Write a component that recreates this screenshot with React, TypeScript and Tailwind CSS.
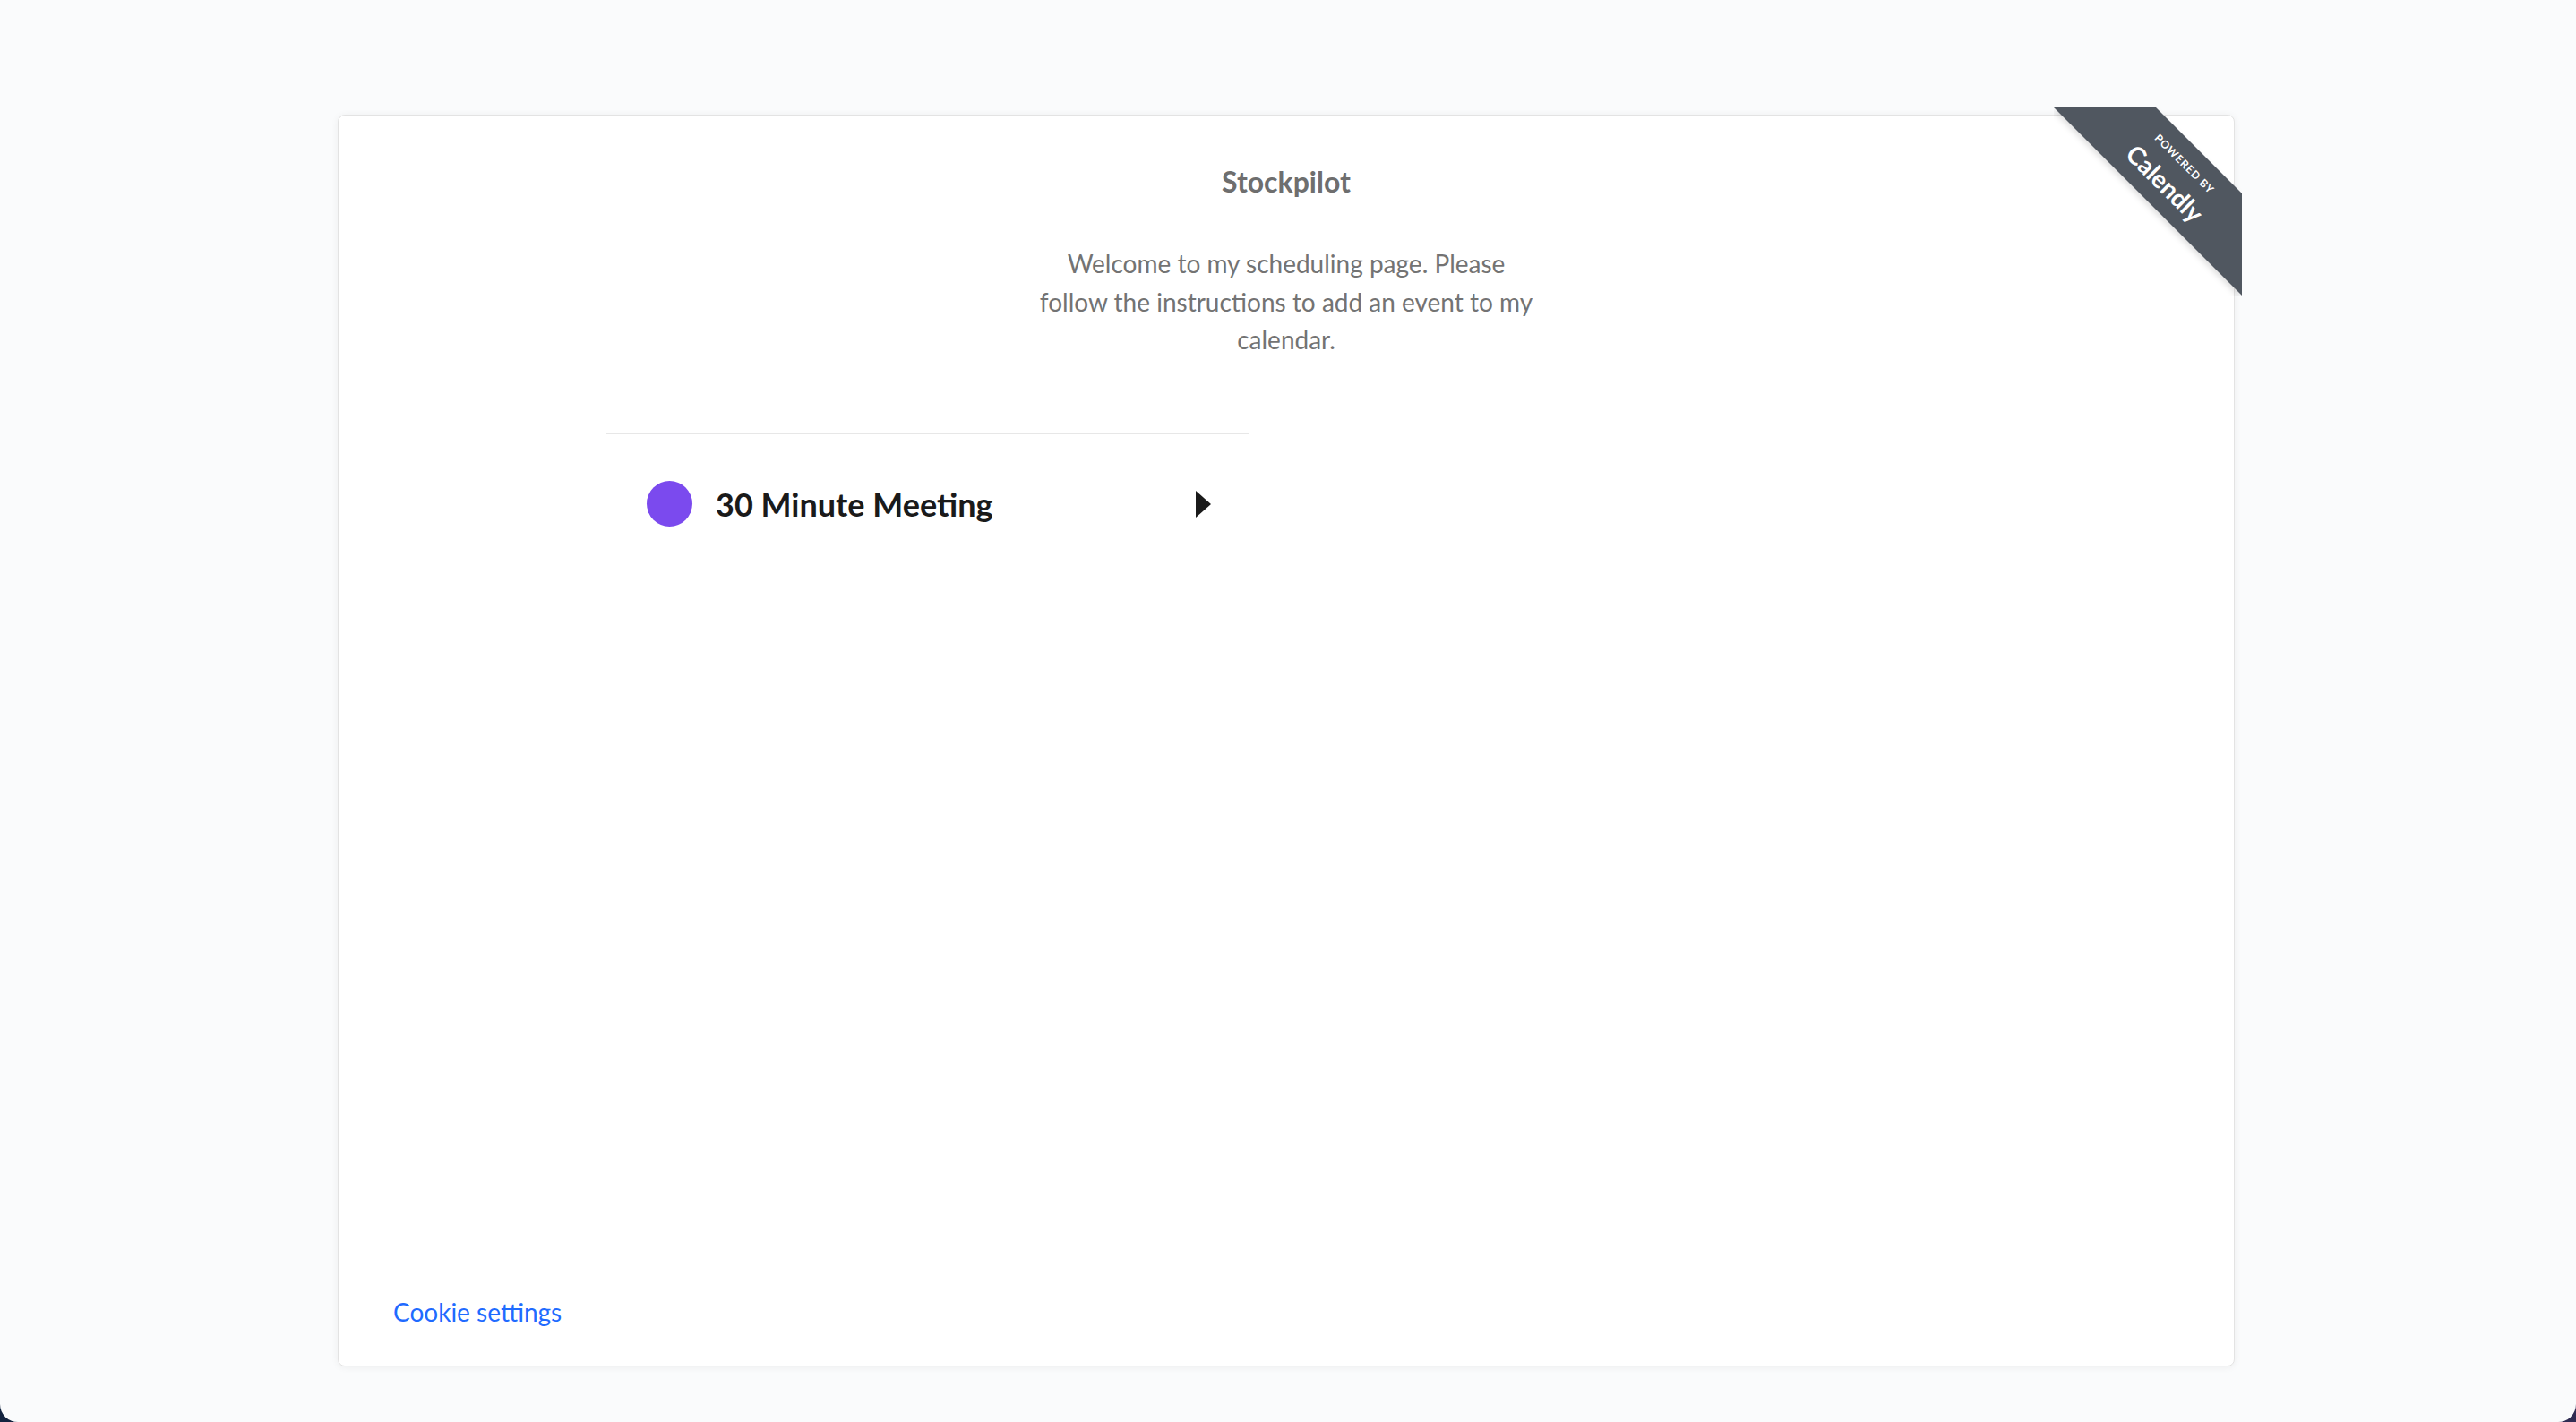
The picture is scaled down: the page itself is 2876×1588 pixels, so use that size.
import React from "react";

const font = { fontFamily: "Lato, 'Liberation Sans', sans-serif" };

function Ribbon() {
  return (
    <div className="absolute -top-[9px] -right-[9px] h-[210px] w-[210px] overflow-hidden pointer-events-none">
      <svg width="210" height="210" viewBox="0 0 210 210" className="absolute inset-0 drop-shadow-[-2px_3px_3px_rgba(0,0,0,0.12)]">
        <polygon points="0,0 114,0 210,96 210,210" fill="#505760" />
      </svg>
      <div className="absolute left-[133px] top-[76px] h-0 w-0">
        <div className="absolute -left-[150px] -top-[30px] h-[60px] w-[300px] rotate-45 text-center text-white">
          <div className="absolute left-0 right-0 top-[5px] text-[12px] font-bold leading-[14px] tracking-[0.08em]">POWERED BY</div>
          <div className="absolute left-0 right-0 top-[28px] text-[28px] font-bold leading-[28px]">Calendly</div>
        </div>
      </div>
    </div>
  );
}

function EventRow({ name, color }: { name: string; color: string }) {
  return (
    <div className="border-t-2 border-[#e7e7e7]">
      <button className="flex h-[156px] w-full items-center pl-[45px] pr-[42px] text-left">
        <span className="h-[51px] w-[51px] shrink-0 rounded-full" style={{ backgroundColor: color }} />
        <span className="ml-[26px] flex-1 text-[36px] font-bold text-[#1a1a1a]">{name}</span>
        <svg width="17" height="30" viewBox="0 0 17 30">
          <polygon points="0,0 17,15 0,30" fill="#1a1a1a" />
        </svg>
      </button>
    </div>
  );
}

export default function App() {
  return (
    <div className="h-[1588px] w-full bg-gradient-to-r from-[#13233f] to-[#2f2b52]" style={font}>
      <div className="h-full w-full rounded-b-[20px] bg-[#fafbfc] pt-[128px]">
        <div className="relative ml-[377px] flex h-[1398px] w-[2118px] flex-col rounded-[8px] border border-[#e3e3e3] bg-white shadow-[0_1px_8px_rgba(0,0,0,0.06)]">
          <Ribbon />
          <div className="flex flex-col items-center pt-[54px]">
            <h1 className="text-[32px] font-bold leading-[40px] text-[#6e6e6e]">Stockpilot</h1>
            <p className="mt-[50px] text-center text-[28px] leading-[42.5px] text-[#737373]">
              Welcome to my scheduling page. Please
              <br />
              follow the instructions to add an event to my
              <br />
              calendar.
            </p>
          </div>
          <div className="mx-auto mt-[82px] grid w-[1518px] grid-cols-2 gap-x-[84px]">
            <EventRow name="30 Minute Meeting" color="#7b4aee" />
          </div>
          <div className="mt-auto pb-[42px] pl-[61px]">
            <button className="text-[28px] leading-[36px] text-[#1f6bff]">Cookie settings</button>
          </div>
        </div>
      </div>
    </div>
  );
}
